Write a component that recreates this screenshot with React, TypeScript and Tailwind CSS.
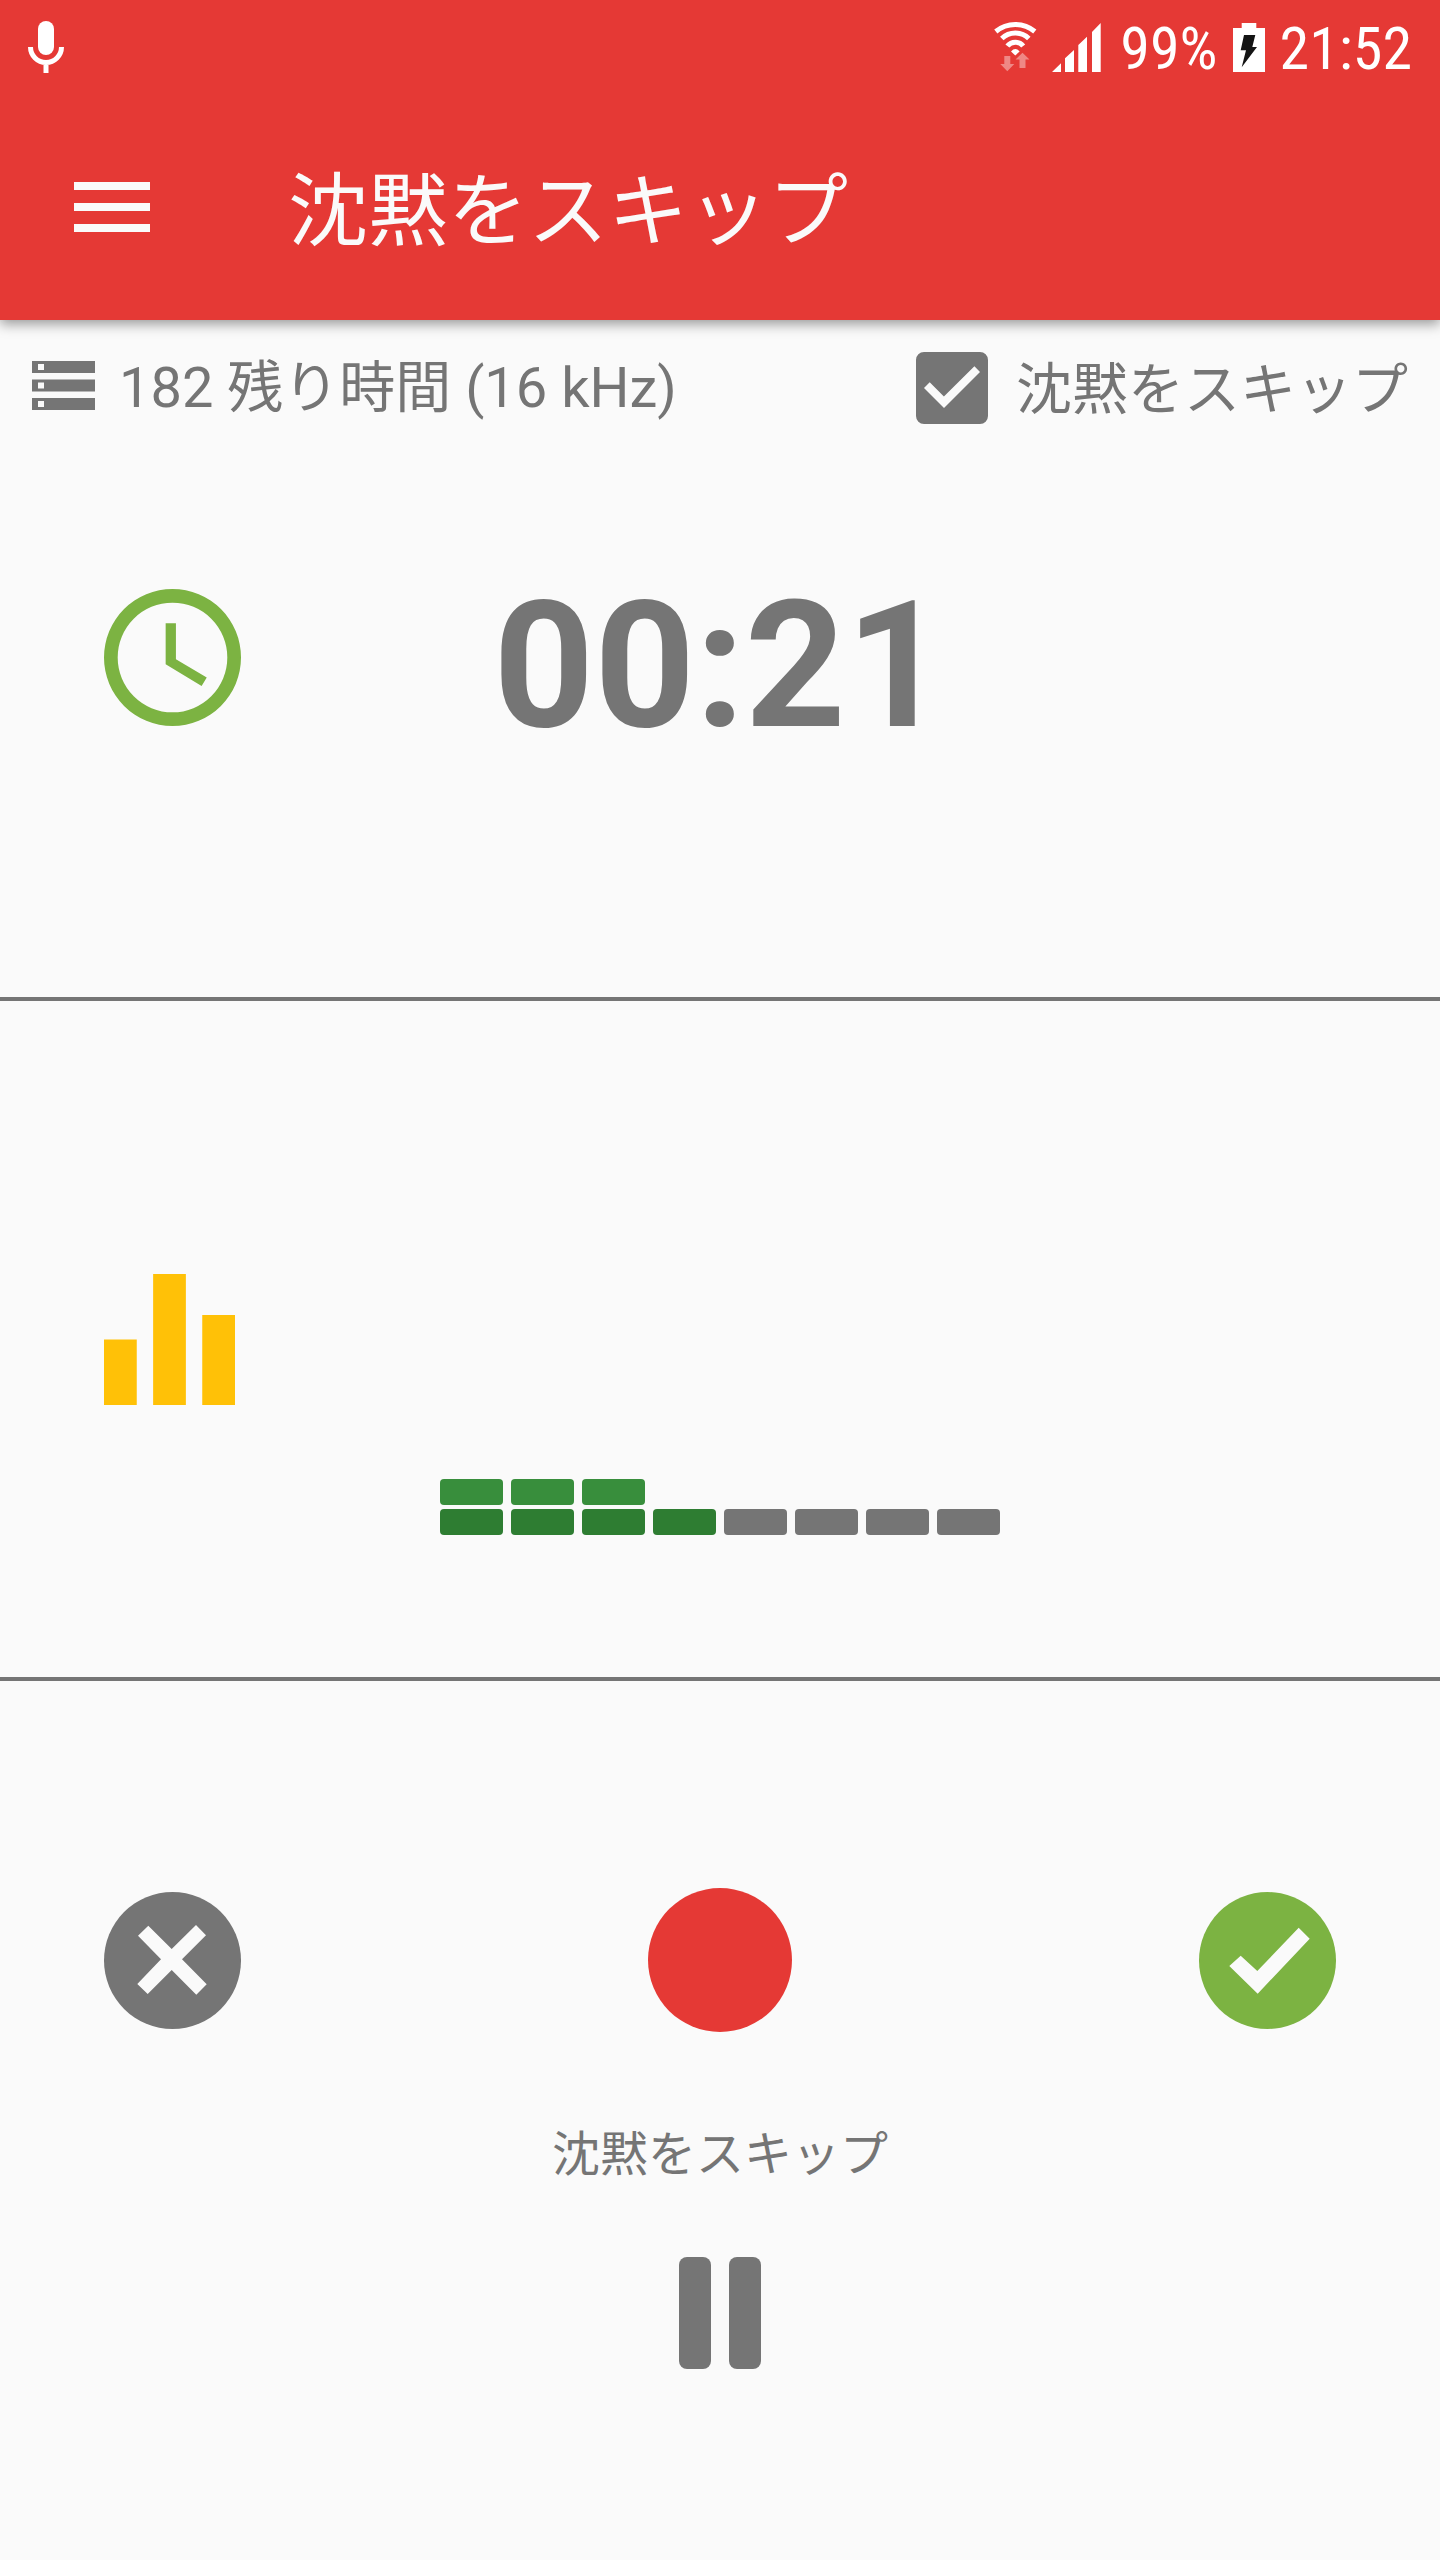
import { useState } from 'react';

const METER_COLUMNS = [2, 2, 2, 1, 0, 0, 0, 0];

function MicIcon() {
    return (
        <svg viewBox="0 0 36 52" className="h-[52px] w-9" fill="none" stroke="currentColor" strokeWidth="5">
            <rect x="10" y="0" width="16" height="34" rx="8" fill="currentColor" stroke="none" />
            <path d="M2.5 26a15.5 15.5 0 0 0 31 0M18 41v11" />
        </svg>
    );
}

function WifiIcon() {
    return (
        <svg viewBox="0 0 43 50" className="h-[50px] w-[43px]" fill="none" stroke="currentColor" strokeWidth="5">
            <path d="M1.8 9.5a30.7 30.7 0 0 1 39 0" />
            <path d="M7.8 16.5a19.3 19.3 0 0 1 27 0" />
            <path d="M13.4 24a10 10 0 0 1 15.8 0" />
            <path d="M17 29.4q4.3-4.8 8.6 0l-4.3 4z" fill="currentColor" stroke="none" />
            <path
                d="M10.3 34h6v8h4l-7 7.3-7-7.3h4zM28.5 30.7l7 6.7h-4V46h-6v-8.6h-4z"
                fill="currentColor"
                fillOpacity="0.4"
                stroke="none"
            />
        </svg>
    );
}

function SignalIcon() {
    return (
        <svg viewBox="0 0 49 49" className="h-[49px] w-[49px]" fill="currentColor">
            <path d="M0 49l9-8.7V49zM13 49V35.3l9-8.3v22zM26.3 49V22l8.7-8.3V49zM40 49V9l8.7-9v49z" />
        </svg>
    );
}

function BatteryIcon() {
    return (
        <svg viewBox="0 0 32 49" className="h-[49px] w-8">
            <path d="M8.7 0h14.6v5H32v44H0V5h8.7z" fill="currentColor" />
            <path d="M11 12h11.3l-3 12H24L8.7 44.3 13 27.3H7.7z" fill="#141414" />
        </svg>
    );
}

function StorageIcon() {
    return (
        <svg viewBox="0 0 63 49" className="mt-[9px] h-[49px] w-[63px]" fill="currentColor" fillRule="evenodd">
            <path d="M0 0h63v12H0zM6 3v6h6V3zM0 18.5h63v12H0zM6 21.5v6h6v-6zM0 37h63v12H0zM6 40v6h6v-6z" />
        </svg>
    );
}

function LevelMeter() {
    return (
        <div className="flex h-[392px] items-end gap-2">
            {METER_COLUMNS.map((level, i) => (
                <div key={i} className="flex flex-col gap-1">
                    {level > 1 && <div className="h-[26px] w-[63px] rounded-sm bg-[#388e3c]" />}
                    <div className={level > 0 ? 'h-[26px] w-[63px] rounded-sm bg-[#2e7d32]' : 'h-[26px] w-[63px] rounded-sm bg-[#757575]'} />
                </div>
            ))}
        </div>
    );
}

export default function App() {
    const [skipSilence, setSkipSilence] = useState(true);

    return (
        <div className="flex min-h-screen flex-col bg-[#fafafa] font-['Roboto','Noto_Sans_CJK_JP',sans-serif] text-[#757575]">
            <header className="bg-[#e53935] shadow-[0_4px_12px_rgba(0,0,0,0.4)]">
                {/* Status bar */}
                <div className="flex h-24 items-center justify-between px-7 pb-0.5 font-['Roboto_Condensed','Roboto',sans-serif] text-[60px] leading-none text-white">
                    <MicIcon />
                    <div className="flex items-center gap-[15px]">
                        <WifiIcon />
                        <SignalIcon />
                        <span className="pt-1 pl-1">99%</span>
                        <BatteryIcon />
                        <span className="pt-1">21:52</span>
                    </div>
                </div>

                {/* Toolbar */}
                <div className="flex h-56 items-center pb-0.5 pl-[74px] text-[#fafafa]">
                    <button type="button" aria-label="メニュー" className="flex w-[76px] flex-col gap-[13px]">
                        <span className="h-2 bg-current" />
                        <span className="h-2 bg-current" />
                        <span className="h-2 bg-current" />
                    </button>
                    <h1 className="ml-[138px] pt-2.5 text-[80px] leading-none">沈黙をスキップ</h1>
                </div>
            </header>

            <main className="flex grow flex-col">
                {/* Elapsed time */}
                <section className="grid min-h-[681px] grid-rows-[1fr_auto_1fr] border-b-4 border-[#757575] pb-0.5">
                    <div className="flex items-start justify-between px-8 pt-8 text-[56px] leading-[72px]">
                        <div className="flex items-start gap-6">
                            <StorageIcon />
                            <span>182 残り時間 (16 kHz)</span>
                        </div>
                        <label className="flex items-start gap-7">
                            <span className="relative size-[72px]">
                                <input
                                    type="checkbox"
                                    checked={skipSilence}
                                    onChange={(e) => setSkipSilence(e.target.checked)}
                                    className="block size-[72px] appearance-none rounded-lg border-8 border-[#757575] checked:bg-[#757575]"
                                />
                                {skipSilence && (
                                    <svg viewBox="0 0 72 72" className="pointer-events-none absolute inset-0 size-[72px]">
                                        <path d="M8 36l5.7-5.7 14.2 14.2L58.4 14.3 64 20 28 56z" fill="#fafafa" />
                                    </svg>
                                )}
                            </span>
                            <span className="pt-0.5">沈黙をスキップ</span>
                        </label>
                    </div>
                    <div className="grid grid-cols-[1fr_auto_1fr] items-center px-[104px]">
                        <svg viewBox="2 2 20 20" className="size-[137px] text-[#7cb342]" fill="currentColor">
                            <path d="M12 2a10 10 0 1 0 0 20 10 10 0 0 0 0-20zm0 18a8 8 0 1 1 0-16 8 8 0 0 1 0 16z" />
                            <path d="M12.5 7H11v6l5.25 3.15.75-1.23-4.5-2.67z" />
                        </svg>
                        <time className="pt-4 text-[176px] leading-none font-bold">00:21</time>
                    </div>
                </section>

                {/* Input level */}
                <section className="grid min-h-[680px] grid-cols-[1fr_auto_1fr] items-center border-b-4 border-[#757575] px-[104px]">
                    <svg viewBox="4 4 16 16" className="size-[131px] text-[#ffc107]" fill="currentColor">
                        <path d="M10 20h4V4h-4zM4 20h4v-8H4zM16 9v11h4V9z" />
                    </svg>
                    <LevelMeter />
                </section>

                {/* Recorder controls */}
                <section className="grid min-h-[558px] grid-cols-[1fr_auto_1fr] items-center px-[104px]">
                    <button type="button" aria-label="キャンセル" className="justify-self-start">
                        <svg viewBox="0 0 137 137" className="size-[137px]">
                            <circle cx="68.5" cy="68.5" r="68.5" fill="#757575" />
                            <path
                                d="M34 43.7l10.3-10L67.7 57 92 33l10 10.3-24 24 24.7 25-10.4 10.4L67.7 78l-24 24-10.4-10L57 67.3z"
                                fill="#fafafa"
                            />
                        </svg>
                    </button>
                    <button type="button" aria-label="録音" className="size-36 rounded-full bg-[#e53935]" />
                    <button type="button" aria-label="完了" className="justify-self-end">
                        <svg viewBox="0 0 137 137" className="size-[137px]">
                            <circle cx="68.5" cy="68.5" r="68.5" fill="#7cb342" />
                            <path d="M30.3 74l11.4-10.3L58.3 79l41.4-43.3 11 11-52 55z" fill="#fafafa" />
                        </svg>
                    </button>
                </section>

                <div className="-mt-27 flex flex-col items-center pb-48">
                    <p className="text-[48px] leading-[48px]">沈黙をスキップ</p>
                    <button type="button" aria-label="一時停止" className="mt-[78px] flex gap-[18px]">
                        <span className="h-28 w-8 rounded-lg bg-[#757575]" />
                        <span className="h-28 w-8 rounded-lg bg-[#757575]" />
                    </button>
                </div>
            </main>
        </div>
    );
}
